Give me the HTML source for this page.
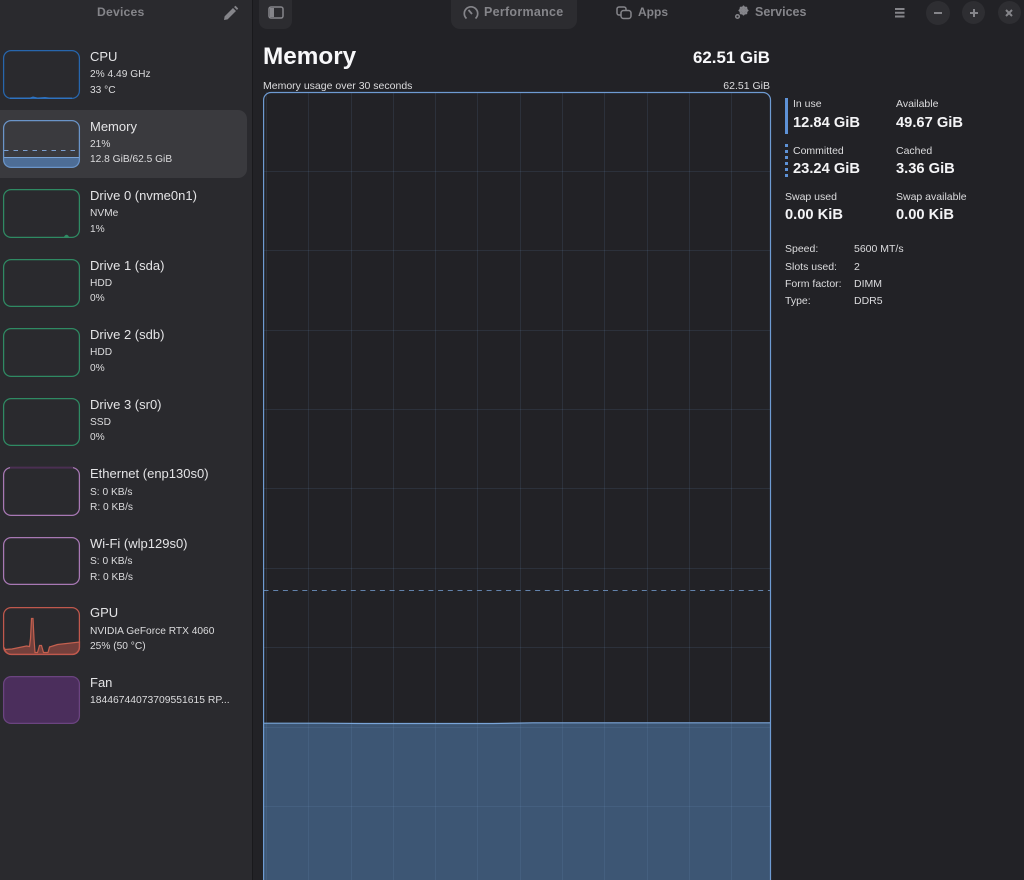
<!DOCTYPE html>
<html><head><meta charset="utf-8">
<style>
html,body{margin:0;padding:0;width:1024px;height:880px;overflow:hidden;background:#222226}
body{position:relative;font-family:"Liberation Sans",sans-serif;color:#e6e6e8}
.t{position:absolute;white-space:nowrap;line-height:16px;font-size:10.4px}
.h{font-size:13px;color:#e4e4e6}
.s{font-size:10.2px;color:#dcdcde}
.b{font-weight:700;color:#f4f4f6;font-size:14.7px;line-height:18px}
.nav{font-weight:700;font-size:12.5px;color:#85858a}
svg{position:absolute;overflow:visible}
</style></head><body>
<div style="position:absolute;left:0;top:0;width:252px;height:880px;background:#2a2a2e;border-right:1px solid #19191c"></div>
<div style="position:absolute;left:0;top:110px;width:247px;height:68px;background:#3a3a3e;border-radius:0 9px 9px 0"></div>

<div class="t nav" style="left:97px;top:4px;font-size:12.2px;letter-spacing:.2px">Devices</div>
<svg style="left:223px;top:5px" width="16" height="16" viewBox="0 0 16 16"><path d="M1 15l.6-3.6L10 3l3 3-8.400 8.400zM11 2l1.500-1.200 2.700 2.700L14 5z" fill="#85858a"/></svg>

<svg style="left:0;top:0" width="90" height="730" fill="none" stroke-width="1.250">
<rect x="3.600" y="50.600" width="75.800" height="47.800" rx="7.500" stroke="#2766ad"/>
<path d="M10 98.300h20l3-1 5 1 7-.5 4 .5h23" stroke="#2e72c0" stroke-width="1.500"/>

<path d="M4 157.500H79V160a7 7 0 0 1-7 7H11a7 7 0 0 1-7-7z" fill="#4d6d96" stroke="none"/>
<path d="M4 157.500H79" stroke="#7aa2d4" stroke-width="1"/>
<path d="M4 150.500H79" stroke="#7c9fd0" stroke-width="1" stroke-dasharray="4.500 5"/>
<rect x="3.600" y="120.600" width="75.800" height="46.800" rx="7.500" stroke="#6a94c8"/>

<rect x="3.600" y="189.600" width="75.800" height="47.800" rx="7.500" stroke="#2f8a63"/>
<path d="M64 237c1-3 4-3 5 0z" fill="#2f8a63" stroke="none"/>
<rect x="3.600" y="259.600" width="75.800" height="46.800" rx="7.500" stroke="#2f8a63"/>
<rect x="3.600" y="328.600" width="75.800" height="47.800" rx="7.500" stroke="#2f8a63"/>
<rect x="3.600" y="398.600" width="75.800" height="46.800" rx="7.500" stroke="#2f8a63"/>

<rect x="3.600" y="467.600" width="75.800" height="47.800" rx="7.500" stroke="#a878b4"/>
<path d="M10 467.600H73" stroke="#4a2f52" stroke-width="2"/>
<rect x="3.600" y="537.600" width="75.800" height="46.800" rx="7.500" stroke="#a878b4"/>

<path transform="translate(4.500 608.500)" d="M0 41L7.500 40.500 22 37.500 25 38 26 30 27 10 28.500 10 29.500 30 30.500 44 33 44 35 37 37 37 39 44 43.500 44 45 38.500 53 36 75 33.500V39a7 7 0 0 1-7 7H7a7 7 0 0 1-7-7z" fill="#74403c" stroke="#c4604f" stroke-width="1.200"/>
<rect x="3.600" y="607.600" width="75.800" height="46.800" rx="7.500" stroke="#c0584d"/>

<rect x="3.600" y="676.600" width="75.800" height="46.800" rx="7.500" fill="#4b2e5c" stroke="#6b4480"/>
</svg>

<div class="t h" style="left:90px;top:49px">CPU</div>
<div class="t s" style="left:90px;top:67px">2% 4.49 GHz</div>
<div class="t s" style="left:90px;top:83px">33 °C</div>
<div class="t h" style="left:90px;top:119px">Memory</div>
<div class="t s" style="left:90px;top:137px">21%</div>
<div class="t s" style="left:90px;top:152px">12.8 GiB/62.5 GiB</div>
<div class="t h" style="left:90px;top:188px">Drive 0 (nvme0n1)</div>
<div class="t s" style="left:90px;top:206px">NVMe</div>
<div class="t s" style="left:90px;top:222px">1%</div>
<div class="t h" style="left:90px;top:258px">Drive 1 (sda)</div>
<div class="t s" style="left:90px;top:276px">HDD</div>
<div class="t s" style="left:90px;top:291px">0%</div>
<div class="t h" style="left:90px;top:327px">Drive 2 (sdb)</div>
<div class="t s" style="left:90px;top:345px">HDD</div>
<div class="t s" style="left:90px;top:361px">0%</div>
<div class="t h" style="left:90px;top:397px">Drive 3 (sr0)</div>
<div class="t s" style="left:90px;top:415px">SSD</div>
<div class="t s" style="left:90px;top:430px">0%</div>
<div class="t h" style="left:90px;top:466px">Ethernet (enp130s0)</div>
<div class="t s" style="left:90px;top:485px">S: 0 KB/s</div>
<div class="t s" style="left:90px;top:500px">R: 0 KB/s</div>
<div class="t h" style="left:90px;top:536px">Wi-Fi (wlp129s0)</div>
<div class="t s" style="left:90px;top:554px">S: 0 KB/s</div>
<div class="t s" style="left:90px;top:570px">R: 0 KB/s</div>
<div class="t h" style="left:90px;top:605px">GPU</div>
<div class="t s" style="left:90px;top:624px">NVIDIA GeForce RTX 4060</div>
<div class="t s" style="left:90px;top:639px">25% (50 °C)</div>
<div class="t h" style="left:90px;top:675px">Fan</div>
<div class="t s" style="left:90px;top:693px;font-size:10.350px">18446744073709551615 RP...</div>

<!-- header -->
<div style="position:absolute;left:259px;top:0;width:33px;height:29px;background:#2c2c30;border-radius:0 0 8px 8px"></div>
<svg style="left:268px;top:5px" width="16" height="15" viewBox="0 0 16 15"><rect x="1" y="2" width="14" height="11" rx="2" fill="none" stroke="#85858a" stroke-width="1.500"/><rect x="2" y="3" width="4" height="9" fill="#85858a"/></svg>
<div style="position:absolute;left:451px;top:0;width:126px;height:29px;background:#2c2c30;border-radius:0 0 9px 9px"></div>
<svg style="left:463px;top:5px" width="16" height="15" viewBox="0 0 16 15"><path d="M3.500 13.500A6.700 6.700 0 1 1 12.500 13.500" fill="none" stroke="#85858a" stroke-width="1.700"/><path d="M5.500 5l3.500 4" stroke="#85858a" stroke-width="1.800"/></svg>
<div class="t nav" style="left:484px;top:4px;letter-spacing:.28px">Performance</div>
<svg style="left:616px;top:5px" width="16" height="15" viewBox="0 0 16 15"><path d="M5 10H3a2 2 0 0 1-2-2V4a2 2 0 0 1 2-2h5a2 2 0 0 1 2 2v1" fill="none" stroke="#85858a" stroke-width="1.500"/><rect x="5" y="5.500" width="10" height="8" rx="2.500" fill="none" stroke="#85858a" stroke-width="1.500"/></svg>
<div class="t nav" style="left:638px;top:4px;font-size:12px">Apps</div>
<svg style="left:734px;top:5px" width="16" height="15" viewBox="0 0 16 15"><circle cx="9.500" cy="5.500" r="3.200" fill="none" stroke="#85858a" stroke-width="2.400"/><path d="M9.500 .5v10M4.500 5.500h10M6 2l7 7M13 2l-7 7" stroke="#85858a" stroke-width="1.300"/><circle cx="3.500" cy="11.500" r="1.800" fill="none" stroke="#85858a" stroke-width="1.500"/></svg>
<div class="t nav" style="left:755px;top:4px">Services</div>

<svg style="left:895px;top:8px" width="10" height="10"><path d="M0 1h9.500M0 4.800h9.500M0 8.500h9.500" stroke="#85858a" stroke-width="2"/></svg>
<div style="position:absolute;left:926px;top:1px;width:24px;height:24px;border-radius:50%;background:#2e2e32"></div>
<div style="position:absolute;left:962px;top:1px;width:23px;height:23px;border-radius:50%;background:#2e2e32"></div>
<div style="position:absolute;left:998px;top:1px;width:23px;height:23px;border-radius:50%;background:#2e2e32"></div>
<svg style="left:926px;top:1px" width="96" height="24"><path d="M8 12h8M44 12h8M48 8v8" stroke="#85858a" stroke-width="2"/><path d="M80 9l6 6M86 9l-6 6" stroke="#85858a" stroke-width="2"/></svg>

<!-- title -->
<div class="t" style="left:263px;top:42px;font-size:24.300px;line-height:30px;font-weight:700;color:#f8f8fa">Memory</div>
<div class="t" style="right:254px;top:46px;font-size:16.900px;line-height:24px;font-weight:700;color:#f8f8fa">62.51 GiB</div>
<div class="t" style="left:263px;top:78px;font-size:10.500px;color:#dcdcde">Memory usage over 30 seconds</div>
<div class="t" style="right:254px;top:78px;font-size:10.500px;color:#dcdcde">62.51 GiB</div>

<!-- chart -->
<svg style="left:263px;top:92px" width="508" height="788" viewBox="0 0 508 788">
<rect x="1" y="631" width="506" height="157" fill="#3d5674"/>
<g stroke="#7aa5d8" stroke-opacity=".12" stroke-width="1">
<path d="M3.500 0V788M45.500 0V788M88.500 0V788M130.500 0V788M172.500 0V788M214.500 0V788M257.500 0V788M299.500 0V788M341.500 0V788M384.500 0V788M426.500 0V788M468.500 0V788"/>
<path d="M0 79.500H508M0 158.500H508M0 238.500H508M0 317.500H508M0 396.500H508M0 476.500H508M0 555.500H508M0 635.500H508M0 714.500H508"/>
</g>
<path d="M.5 498.500H507.500" stroke="#6f94c4" stroke-opacity=".85" stroke-width="1" stroke-dasharray="5 4.700"/>
<path d="M.5 631.200H60L100 631.500H230L270 630.800H507.500" stroke="#7aa5d8" stroke-width="1.200" fill="none"/>
<path d="M.6 788V8a7.500 7.500 0 0 1 7.500-7.500H500a7.500 7.500 0 0 1 7.500 7.500V788" fill="none" stroke="#6e9bd2" stroke-width="1.200"/>
</svg>

<!-- stats -->
<div style="position:absolute;left:785px;top:98px;width:3px;height:36px;background:#5e92d6"></div>
<div style="position:absolute;left:785px;top:144px;width:3px;height:36px;background:repeating-linear-gradient(#5e92d6 0 3px,transparent 3px 6px)"></div>
<div class="t s" style="left:793px;top:96px;font-size:10.500px">In use</div>
<div class="t b" style="left:793px;top:114px">12.84 GiB</div>
<div class="t s" style="left:896px;top:96px;font-size:10.500px">Available</div>
<div class="t b" style="left:896px;top:114px">49.67 GiB</div>
<div class="t s" style="left:793px;top:143px;font-size:10.500px">Committed</div>
<div class="t b" style="left:793px;top:160px">23.24 GiB</div>
<div class="t s" style="left:896px;top:143px;font-size:10.500px">Cached</div>
<div class="t b" style="left:896px;top:160px">3.36 GiB</div>
<div class="t s" style="left:785px;top:189px;font-size:10.500px">Swap used</div>
<div class="t b" style="left:785px;top:206px">0.00 KiB</div>
<div class="t s" style="left:896px;top:189px;font-size:10.500px">Swap available</div>
<div class="t b" style="left:896px;top:206px">0.00 KiB</div>
<div class="t s" style="left:785px;top:241px;font-size:10.500px">Speed:</div>
<div class="t s" style="left:854px;top:241px;font-size:10.500px">5600 MT/s</div>
<div class="t s" style="left:785px;top:259px;font-size:10.500px">Slots used:</div>
<div class="t s" style="left:854px;top:259px;font-size:10.500px">2</div>
<div class="t s" style="left:785px;top:276px;font-size:10.500px">Form factor:</div>
<div class="t s" style="left:854px;top:276px;font-size:10.500px">DIMM</div>
<div class="t s" style="left:785px;top:293px;font-size:10.500px">Type:</div>
<div class="t s" style="left:854px;top:293px;font-size:10.500px">DDR5</div>
</body></html>
